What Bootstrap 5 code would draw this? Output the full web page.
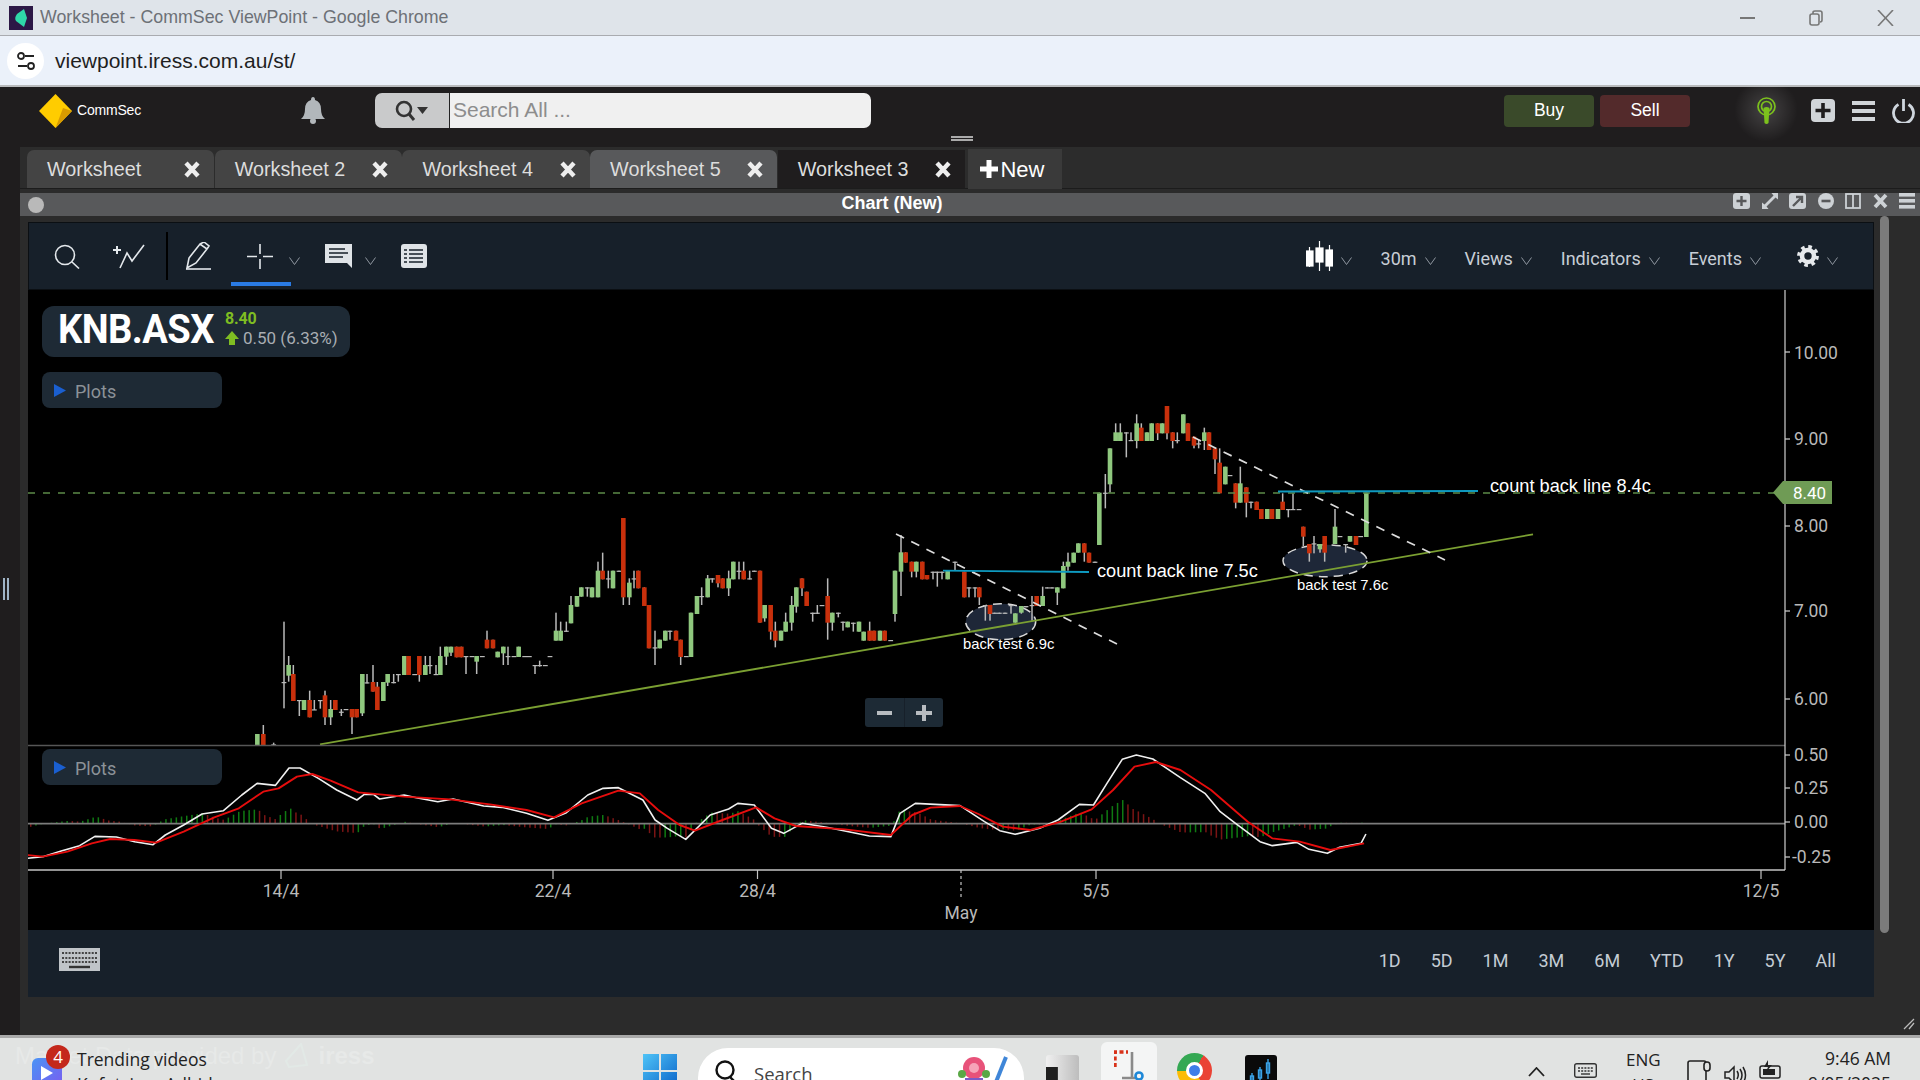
<!DOCTYPE html>
<html lang="en"><head><meta charset="utf-8"><title>Worksheet - CommSec ViewPoint</title>
<link rel="stylesheet" href="https://cdn.jsdelivr.net/npm/bootstrap@5.3.0/dist/css/bootstrap.min.css">
<style>
html,body{height:1080px;overflow:hidden;background:#2b2b2b;font-family:"Liberation Sans",Arial,sans-serif}
svg{display:block;flex:none}
.title-bar{height:36px;background:#dfe4ea;border-bottom:1px solid #a9abb0;color:#6d7177;font-size:17.8px;padding-left:9px}
.win-btn{margin-left:auto}
.win-btn svg+svg{margin-left:54px}
.win-btn{padding-right:26px}
.fav{width:24px;height:24px;background:#2c1846;margin-right:7px}
.addr{height:51px;background:#ebf1fa;border-bottom:2px solid #b9bbbd;font-size:21px;color:#1f1f1f;padding-left:7px}
.addr .tune{width:37px;height:36px;background:#fff;border-radius:50%;margin-right:11px}
.app-head{height:60px;background:#1f1d1e;position:relative;padding:0 0 13px 0}
.logo{margin-left:39px;width:33px}
.brand{color:#fff;font-size:14px;margin-left:5px;width:65px;letter-spacing:-.2px}
.bell{margin-left:159px}
.srch{margin-left:50px;width:496px;height:35px;flex-wrap:nowrap}
.srch .btn{width:75px;background:#c9cacb;border:0;border-right:1px solid #222;border-radius:7px 0 0 7px;padding:0}
.srch .form-control{height:35px;background:#f0f0f0;border:0;border-radius:0 7px 7px 0;font-size:21px;padding:0 4px 2px}
.srch .form-control::placeholder{color:#8d8d8d;opacity:1}
.grip{position:absolute;left:951px;top:49px;width:22px;height:5px;border-top:2px solid #aaa;border-bottom:2px solid #aaa}
.trade{width:90px;height:32px;padding:0;font-size:17.5px;color:#fff;border:0;border-radius:4px}
.buy{background:#3a4a2a;margin-left:633px}.sell{background:#532a2b;margin-left:6px}
.buy:hover{background:#3a4a2a;color:#fff}.sell:hover{background:#532a2b;color:#fff}
.beacon{margin-left:67px;width:18px;position:relative}
.beacon::before{content:"";position:absolute;left:-24px;top:-20px;width:66px;height:66px;background:radial-gradient(circle,rgba(255,255,255,.17),rgba(255,255,255,0) 68%)}
.beacon svg{position:relative}
.hd-plus{margin-left:36px}.hd-menu{margin-left:17px}.hd-pow{margin-left:17px}
.work{height:888px}
.side{width:20px;background:#1f1d1e;position:relative}
.side i{position:absolute;left:3px;top:431px;width:6px;height:22px;border-left:2px solid #9fb4c6;border-right:2px solid #9fb4c6}
.tabs{height:42px;background:#2c2c2c;padding:3px 0 0 7px;flex-wrap:nowrap;border-bottom:1px solid #1c1c1c}
.wtab{width:187.2px;height:38px;background:#444;color:#ddd;font-size:19.8px;padding:2px 14px 0 20px;border-radius:7px 7px 0 0;margin-right:.5px}
.wtab.on{background:#58595b}
.wtab.dark{background:#1f1d1e;border-radius:0}
.wtab svg{margin-left:auto;margin-top:-2px}
.newtab{width:94px;height:40px;background:#3a3a3a;color:#fff;font-size:22px;padding-left:12px;margin:-1px 0 0 3px;gap:2px}
.pbar{height:23px;margin-top:4px;background:#58595b;color:#fff;font-weight:700;font-size:18px;position:relative}
.pbar .dot{width:16px;height:16px;border-radius:50%;background:#b9b9b9;margin-left:8px}
.pbar .ttl{position:absolute;left:0;top:0;width:1744px;text-align:center;line-height:21px}
.pbar .ic{margin-left:auto;padding-right:5px;gap:11.5px;height:18px}
.pbody{background:#2b2b2b;padding:6px 0 0 8px;height:819px}
.col-chart{width:1846px}
.tbar{height:68px;background:#17202a;border:1px solid #0b0f13;position:relative;color:#c8ced6;font:18px Roboto,sans-serif}
.tbar .act{position:absolute;left:202px;top:59px;width:60px;height:4px;background:#2a7be4}
.tbar span{padding-top:5px}
.m26{margin-left:25px}.m33{margin-left:33px}.m21{margin-left:21px}.m17{margin-left:17px}.m35{margin-left:35px}.m16{margin-left:16px}.m25{margin-left:25px}.m13{margin-left:13px}
.vsep{width:2px;height:48px;background:#000}
.chev{margin-top:9px}
.tr{margin-left:auto;padding-right:35px}
.tr span+svg,.tr svg+svg{margin-left:8px}
.tr svg+span{margin-left:29px}
.tr svg+svg.gear{margin-left:36px}
.chart{height:640px;background:#000;position:relative;overflow:hidden}
.chart>svg{position:absolute;left:0;top:0}
.chart text{font-family:"Liberation Sans",sans-serif;fill:#fff}
.chart text.tag{font-family:Roboto,sans-serif}
.chart text.ax{font-family:Roboto,sans-serif;fill:#b9b9b9;font-size:17.5px}
.quote{position:absolute;left:14px;top:16px;width:308px;height:51px;background:#1e2a35;border-radius:12px;padding-left:16px}
.sym{font:700 41px/46px Roboto,sans-serif;color:#fff;letter-spacing:-.6px;width:167px;white-space:nowrap;transform:scaleX(.93);transform-origin:left center}
.q1{font:700 16px/16px Roboto,sans-serif;color:#7fbd22;margin-top:5px;letter-spacing:-.2px}
.q2{font:17px/20px Roboto,sans-serif;color:#a9aeb3;margin-top:1px;gap:4px}
.plots{position:absolute;left:14px;width:180px;height:36px;background:#1e2a35;border-radius:8px;color:#8c9298;font:18px Roboto,sans-serif;padding-left:12px;gap:9px}
.plots span{padding-top:2px}
.p1{top:82px}.p2{top:459px}
.zoomc{position:absolute;left:837px;top:408px;width:78px;height:29px;background:#1d2a35;border-radius:3px}
.zoomc div{width:39px;height:29px}
.zoomc div+div{border-left:1px solid #17202a}
.bbar{height:67px;background:#17202a;color:#c4ccd4;font:18px Roboto,sans-serif;padding:0 38px 7px 31px;gap:30px}
.bbar svg{margin-right:auto;margin-top:-2px}
.rsz{position:absolute;right:5px;bottom:5px}
.sbw{width:9px;margin-left:6px;background:#7b7b7b;height:717px;margin-top:-6px;border-radius:5px}
.pbody{position:relative}
.task{height:45px;background:#e1e3e2;border-top:3px solid #a9a9a9;overflow:hidden;position:relative;font-family:"Open Sans",sans-serif;color:#222;font-size:17px;align-items:flex-start}
.ghost{position:absolute;left:15px;top:4px;font:24px "Liberation Sans",sans-serif;color:#e7e9e8;white-space:nowrap;gap:9px}
.t-app{margin:20px 0 0 32px;width:30px;height:30px;border-radius:6px;background:linear-gradient(135deg,#4a94f5,#7a5cf0);position:relative}
.t-app b{position:absolute;left:14px;top:-13px;width:24px;height:24px;border-radius:50%;background:#c4281c;color:#fff;font:400 17px/24px "Open Sans",sans-serif;text-align:center}
.t-news{margin:9px 0 0 15px;width:130px;line-height:25px;white-space:nowrap;font-size:17.5px;position:relative}
.t-win{margin:16px 0 0 436px}
.pill{margin:10px 0 0 21px;width:326px;height:60px;background:#fff;border-radius:30px;padding-left:17px;color:#444;font-size:18.5px;align-items:flex-start}
.pill span{margin:12px 0 0 17px}
.pill svg.fl{margin:8px 12px 0 auto}
.pill svg.m{margin-top:12px}
.t-dark{margin:17px 0 0 22px;width:33px;height:40px;background:linear-gradient(#1f1f1f,#1f1f1f) left bottom/36% 70% no-repeat,linear-gradient(90deg,#f0f0f0,#bdbdbd);border-radius:3px}
.t-snip{margin:4px 0 0 22px;width:56px;height:60px;background:#f4f5f5;border-radius:6px;padding:8px 0 0 13px}
.t-chrome{margin:15px 0 0 20px;width:35px;height:35px;border-radius:50%;background:conic-gradient(from 30deg,#ea4335 0 120deg,#fbbc04 120deg 240deg,#34a853 240deg);position:relative}
.t-chrome::after{content:"";position:absolute;inset:9px;border-radius:50%;background:#3f7ee8;border:3px solid #fff;box-sizing:border-box}
.t-black{margin:17px 0 0 33px;width:32px;height:40px;background:#0a0a0a;border-radius:3px;padding:4px}
.t-car{margin:29px 0 0 251px}.t-key{margin:25px 0 0 29px}
.t-eng{margin:9px 0 0 29px;width:34px;line-height:25px;text-align:center;font-size:17px}
.t-mon{margin:22px 0 0 27px}.t-spk{margin:27px 0 0 12px}.t-bat{margin:22px 0 0 12px}
.t-clk{margin:8px 0 0 26px;width:83px;line-height:25px;text-align:right;font-size:17.5px;white-space:nowrap}
</style></head><body class="d-flex flex-column">

<div class="title-bar d-flex align-items-center">
  <div class="fav d-flex align-items-center justify-content-center"><svg width="14" height="20" viewBox="0 0 14 20"><path d="M10 1 L13 10 L10 19 L2 13 Q0 10 3 6Z" fill="#2fd8a8"/></svg></div>
  <span>Worksheet - CommSec ViewPoint - Google Chrome</span>
  <div class="win-btn d-flex align-items-center">
    <svg width="15" height="16" viewBox="0 0 15 16"><path d="M0 8H15" stroke="#777" stroke-width="2"/></svg>
    <svg width="14" height="16" viewBox="0 0 14 16" fill="none" stroke="#777" stroke-width="1.6"><rect x="1" y="4" width="9" height="11" rx="2"/><path d="M4 4V2.5Q4 1 6 1H11Q13 1 13 3V10Q13 12 11 12"/></svg>
    <svg width="17" height="16" viewBox="0 0 17 16" stroke="#777" stroke-width="1.6"><path d="M1 0L16 16M16 0L1 16"/></svg>
  </div>
</div>

<div class="addr d-flex align-items-center">
  <div class="tune d-flex align-items-center justify-content-center"><svg width="20" height="20" viewBox="0 0 20 20" fill="none" stroke="#222" stroke-width="1.8"><circle cx="5" cy="5" r="3"/><path d="M9 5H18M2 15H11"/><circle cx="15" cy="15" r="3"/></svg></div>
  <span>viewpoint.iress.com.au/st/</span>
</div>

<nav class="navbar app-head flex-nowrap justify-content-start align-items-center">
  <svg class="logo" width="33" height="34" viewBox="0 0 33 34"><path d="M16.5 0L33 17L16.5 34L0 17Z" fill="#ffcc00"/><path d="M16.5 34L24 14L33 17Z" fill="#d79a00"/></svg>
  <span class="brand">CommSec</span>
  <svg class="bell" width="24" height="27" viewBox="0 0 24 27"><path d="M12 0Q14 0 14 3Q20 5 20 12Q20 19 24 22H0Q4 19 4 12Q4 5 10 3Q10 0 12 0Z" fill="#b2b7bb"/><circle cx="12" cy="24" r="3" fill="#b2b7bb"/></svg>
  <form class="input-group srch mb-0">
    <button class="btn d-flex align-items-center justify-content-center gap-1" type="button">
      <svg width="34" height="24" viewBox="0 0 34 24"><circle cx="9" cy="10" r="7" fill="none" stroke="#333" stroke-width="2.6"/><path d="M14 15L19 21" stroke="#333" stroke-width="3"/><path d="M22 8H33L27.5 15Z" fill="#333"/></svg>
    </button>
    <input class="form-control" type="text" placeholder="Search All ...">
  </form>
  <div class="grip"></div>
  <button class="btn trade buy" type="button">Buy</button>
  <button class="btn trade sell" type="button">Sell</button>
  <div class="beacon"><svg width="19" height="28" viewBox="0 0 19 28" fill="none" stroke="#7cc11d" stroke-width="1.7"><circle cx="9.5" cy="9.5" r="8.5"/><circle cx="9.5" cy="9.5" r="5"/><path d="M6.5 11Q9.5 9 12.5 11L11.5 26Q9.5 28 7.5 26Z" fill="#7cc11d" stroke="none"/></svg></div>
  <svg class="hd-plus" width="24" height="23" viewBox="0 0 24 23"><rect width="24" height="23" rx="4" fill="#d0d4d8"/><path d="M12 4V19M4.5 11.500H19.500" stroke="#1f1d1e" stroke-width="3.6"/></svg>
  <svg class="hd-menu" width="23" height="22" viewBox="0 0 23 22" fill="#d0d4d8"><rect width="23" height="4" y="1"/><rect width="23" height="4" y="9"/><rect width="23" height="4" y="17"/></svg>
  <svg class="hd-pow" width="23" height="24" viewBox="0 0 23 24" fill="none" stroke="#cfd6de" stroke-width="2.8"><path d="M6.500 5.500A10 10 0 1 0 16.500 5.500"/><path d="M11.500 0V12"/></svg>
</nav>

<div class="work d-flex">
  <aside class="side"><i></i></aside>
  <main class="flex-grow-1">
    <ul class="nav tabs">
      <li class="wtab d-flex align-items-center"><span>Worksheet</span><svg width="16" height="17" viewBox="0 0 16 17"><path d="M2 2L14 15M14 2L2 15" stroke="#eee" stroke-width="4.4"/></svg></li>
      <li class="wtab d-flex align-items-center"><span>Worksheet 2</span><svg width="16" height="17" viewBox="0 0 16 17"><path d="M2 2L14 15M14 2L2 15" stroke="#eee" stroke-width="4.4"/></svg></li>
      <li class="wtab d-flex align-items-center"><span>Worksheet 4</span><svg width="16" height="17" viewBox="0 0 16 17"><path d="M2 2L14 15M14 2L2 15" stroke="#eee" stroke-width="4.4"/></svg></li>
      <li class="wtab on d-flex align-items-center"><span>Worksheet 5</span><svg width="16" height="17" viewBox="0 0 16 17"><path d="M2 2L14 15M14 2L2 15" stroke="#eee" stroke-width="4.4"/></svg></li>
      <li class="wtab dark d-flex align-items-center"><span>Worksheet 3</span><svg width="16" height="17" viewBox="0 0 16 17"><path d="M2 2L14 15M14 2L2 15" stroke="#eee" stroke-width="4.4"/></svg></li>
      <li class="newtab d-flex align-items-center"><svg width="18" height="18" viewBox="0 0 18 18"><path d="M9 0V18M0 9H18" stroke="#fff" stroke-width="5"/></svg><span>New</span></li>
    </ul>
    <div class="pbar d-flex">
      <div class="dot mt-1"></div>
      <div class="ttl">Chart (New)</div>
      <div class="ic d-flex">
        <svg width="17" height="16" viewBox="0 0 17 16"><rect width="17" height="16" rx="3" fill="#cdd1d5"/><path d="M8.500 3V13M3.500 8H13.500" stroke="#58595b" stroke-width="2.4"/></svg>
        <svg width="16" height="16" viewBox="0 0 16 16" fill="#cdd1d5"><path d="M9.500 0H16V6.500L13.500 4.500L4.500 13.500L6.500 16H0V9.500L2.500 11.500L11.500 2.500Z"/></svg>
        <svg width="17" height="16" viewBox="0 0 17 16"><rect width="17" height="16" rx="3" fill="#cdd1d5"/><path d="M4 13L12 5M7 4H13V10" stroke="#58595b" stroke-width="2.4" fill="none"/></svg>
        <svg width="16" height="16" viewBox="0 0 16 16"><circle cx="8" cy="8" r="8" fill="#cdd1d5"/><path d="M3.500 8H12.500" stroke="#58595b" stroke-width="2.6"/></svg>
        <svg width="16" height="16" viewBox="0 0 16 16" fill="none" stroke="#cdd1d5" stroke-width="1.8"><rect x="1" y="1" width="14" height="14"/><path d="M8 1V15"/></svg>
        <svg width="15" height="16" viewBox="0 0 15 16"><path d="M2 2L13 14M13 2L2 14" stroke="#cdd1d5" stroke-width="3.800"/></svg>
        <svg width="16" height="16" viewBox="0 0 16 16" fill="#cdd1d5"><rect width="16" height="3.600"/><rect width="16" height="3.600" y="6"/><rect width="16" height="3.600" y="12"/></svg>
      </div>
    </div>
    <div class="pbody d-flex">
      <div class="col-chart">
        <div class="tbar d-flex align-items-center">
          <svg class="m26" width="26" height="25" viewBox="0 0 26 25" fill="none" stroke="#e4e8ec" stroke-width="1.6"><circle cx="11" cy="11" r="9.500"/><path d="M18 18L25 24.500"/></svg>
          <svg class="m33" width="32" height="25" viewBox="0 0 32 25" fill="none" stroke="#e4e8ec" stroke-width="1.6"><path d="M4 2V10M0 6H8" stroke-width="2"/><path d="M7 24L14 9L19 17L31 1"/></svg>
          <div class="vsep m21"></div>
          <svg class="m17" width="27" height="28" viewBox="0 0 27 28" fill="none" stroke="#e4e8ec" stroke-width="1.6"><path d="M2 26L4 16L15 2L22 7L11 21L2 26ZM15 2L19 0L24 4L22 7" /><path d="M1 27H26"/></svg>
          <svg class="m35" width="26" height="25" viewBox="0 0 26 25" stroke="#e4e8ec" stroke-width="1.6"><path d="M13 0V10M13 15V25M0 12.500H10M16 12.500H26"/></svg>
          <svg class="m16 chev" width="11" height="8" viewBox="0 0 11 8" fill="none" stroke="#8f979f"><path d="M.5 .5L5.500 7.500L10.500 .5"/></svg>
          <svg class="m26" width="27" height="24" viewBox="0 0 27 24"><path d="M0 0H27V24L22 19H0Z" fill="#dfe3e7"/><path d="M4 5H20M4 9H23M4 13H18" stroke="#17202a" stroke-width="1.600"/></svg>
          <svg class="m13 chev" width="11" height="8" viewBox="0 0 11 8" fill="none" stroke="#8f979f"><path d="M.5 .5L5.500 7.500L10.500 .5"/></svg>
          <svg class="m25" width="26" height="24" viewBox="0 0 26 24"><rect width="26" height="24" rx="3" fill="#dfe3e7"/><path d="M8 6H22M8 10H22M8 14H22M8 18H22M3 6H6M3 10H6M3 14H6M3 18H6" stroke="#17202a" stroke-width="1.500"/></svg>
          <div class="act"></div>
          <div class="tr d-flex align-items-center">
            <svg width="27" height="30" viewBox="0 0 27 30" stroke="#fff" stroke-width="1.200" fill="#fff"><path d="M3.500 6V26M13.500 0V30M23.500 4V30"/><rect x="0" y="10" width="7" height="15"/><rect x="10" y="7" width="7" height="14"/><rect x="20" y="9" width="7" height="16"/></svg>
            <svg class="chev" width="11" height="8" viewBox="0 0 11 8" fill="none" stroke="#8f979f"><path d="M.5 .5L5.500 7.500L10.500 .5"/></svg>
            <span>30m</span>
            <svg class="chev" width="11" height="8" viewBox="0 0 11 8" fill="none" stroke="#8f979f"><path d="M.5 .5L5.500 7.500L10.500 .5"/></svg>
            <span>Views</span>
            <svg class="chev" width="11" height="8" viewBox="0 0 11 8" fill="none" stroke="#8f979f"><path d="M.5 .5L5.500 7.500L10.500 .5"/></svg>
            <span>Indicators</span>
            <svg class="chev" width="11" height="8" viewBox="0 0 11 8" fill="none" stroke="#8f979f"><path d="M.5 .5L5.500 7.500L10.500 .5"/></svg>
            <span>Events</span>
            <svg class="chev" width="11" height="8" viewBox="0 0 11 8" fill="none" stroke="#8f979f"><path d="M.5 .5L5.500 7.500L10.500 .5"/></svg>
            <svg class="gear" width="22" height="22" viewBox="0 0 22 22" fill="none" stroke="#e6e9ec"><circle cx="11" cy="11" r="6" stroke-width="4.600"/><circle cx="11" cy="11" r="9.200" stroke-width="3.400" stroke-dasharray="3.600 3.620"/></svg>
            <svg class="chev" width="11" height="8" viewBox="0 0 11 8" fill="none" stroke="#8f979f"><path d="M.5 .5L5.500 7.500L10.500 .5"/></svg>
          </div>
        </div>
        <div class="chart">
          <svg id="cv" width="1846" height="640" viewBox="28 290 1846 640">
            <g id="ell"></g><g id="macd"></g><g id="candles"></g><g id="lines"></g>
            <text x="1490" y="492" font-size="18.200">count back line 8.4c</text>
            <text x="1097" y="577" font-size="18.200">count back line 7.5c</text>
            <text x="963" y="649" font-size="14.800">back test 6.9c</text>
            <text x="1297" y="590" font-size="14.800">back test 7.6c</text>
            <polygon points="1773,492.500 1783,481 1832,481 1832,504 1783,504" fill="#6f9b55"/>
            <text class="tag" x="1793" y="499" font-size="17">8.40</text>
            <g class="ax-labels">
              <text class="ax" x="1794" y="359">10.00</text><text class="ax" x="1794" y="445">9.00</text><text class="ax" x="1794" y="532">8.00</text><text class="ax" x="1794" y="617">7.00</text><text class="ax" x="1794" y="705">6.00</text>
              <text class="ax" x="1794" y="761">0.50</text><text class="ax" x="1794" y="794">0.25</text><text class="ax" x="1794" y="828">0.00</text><text class="ax" x="1792" y="863">-0.25</text>
              <text class="ax" x="281" y="897" text-anchor="middle">14/4</text><text class="ax" x="553" y="897" text-anchor="middle">22/4</text><text class="ax" x="757.500" y="897" text-anchor="middle">28/4</text><text class="ax" x="1096" y="897" text-anchor="middle">5/5</text><text class="ax" x="1761" y="897" text-anchor="middle">12/5</text><text class="ax" x="961" y="919" text-anchor="middle">May</text>
            </g>
          </svg>
          <div class="quote d-flex">
            <div class="sym">KNB.ASX</div>
            <div>
              <div class="q1">8.40</div>
              <div class="q2 d-flex align-items-center"><svg width="14" height="14" viewBox="0 0 14 14"><path d="M7 0L14 8H10V14H4V8H0Z" fill="#7fbd22"/></svg><span>0.50 (6.33%)</span></div>
            </div>
          </div>
          <div class="plots p1 d-flex align-items-center"><svg width="12" height="13" viewBox="0 0 12 13"><path d="M0 0L12 6.500L0 13Z" fill="#1a5fd0"/></svg><span>Plots</span></div>
          <div class="plots p2 d-flex align-items-center"><svg width="12" height="13" viewBox="0 0 12 13"><path d="M0 0L12 6.500L0 13Z" fill="#1a5fd0"/></svg><span>Plots</span></div>
          <div class="zoomc d-flex">
            <div class="d-flex align-items-center justify-content-center"><svg width="15" height="4" viewBox="0 0 15 4"><rect width="15" height="4" fill="#b8bcc0"/></svg></div>
            <div class="d-flex align-items-center justify-content-center"><svg width="16" height="16" viewBox="0 0 16 16"><path d="M8 0V16M0 8H16" stroke="#b8bcc0" stroke-width="4"/></svg></div>
          </div>
        </div>
        <div class="bbar d-flex align-items-center">
          <svg width="41" height="23" viewBox="0 0 41 23"><rect width="41" height="23" fill="#c0c4c8"/><path d="M3 5H38M3 10H38M3 14H38" stroke="#444" stroke-width="2" stroke-dasharray="2 1.300"/><path d="M10 19H31" stroke="#333" stroke-width="2.400"/></svg>
          <span>1D</span><span>5D</span><span>1M</span><span>3M</span><span>6M</span><span>YTD</span><span>1Y</span><span>5Y</span><span>All</span>
        </div>
      </div>
      <div class="sbw"></div>
      <svg class="rsz" width="12" height="12" viewBox="0 0 12 12" stroke="#bbb" stroke-width="1.300"><path d="M1 11L11 1M6 11L11 5"/></svg>
    </div>
  </main>
</div>

<footer class="task d-flex">
  <div class="ghost d-flex align-items-center"><span>Market Data provided by</span><svg width="24" height="26" viewBox="0 0 24 26" fill="none" stroke="#e2e9e6" stroke-width="2"><path d="M1 18L16 1L22 22L4 24Z"/></svg><b>iress</b></div>
  <div class="t-app d-flex align-items-center justify-content-center"><svg width="12" height="14" viewBox="0 0 12 14"><path d="M0 0L12 7L0 14Z" fill="#fff"/></svg><b>4</b></div>
  <div class="t-news">Trending videos<br>Kofutsimo Adhid</div>
  <svg class="t-win" width="34" height="34" viewBox="0 0 34 34"><defs><linearGradient id="wg" x1="0" y1="0" x2="1" y2="1"><stop offset="0" stop-color="#4fc4f7"/><stop offset="1" stop-color="#0a63c9"/></linearGradient></defs><path d="M0 0H16V16H0ZM18 0H34V16H18ZM0 18H16V34H0ZM18 18H34V34H18Z" fill="url(#wg)"/></svg>
  <div class="pill d-flex">
    <svg class="m" width="22" height="24" viewBox="0 0 22 24" fill="none" stroke="#111" stroke-width="2.400"><circle cx="10" cy="10" r="8.500"/><path d="M15 17L21 23"/></svg>
    <span>Search</span>
    <svg class="fl" width="54" height="34" viewBox="0 0 54 34"><circle cx="16" cy="12" r="11" fill="#e8527a"/><circle cx="16" cy="12" r="5" fill="#f6a3b8"/><circle cx="4" cy="18" r="4" fill="#5aa846"/><circle cx="28" cy="18" r="4" fill="#5aa846"/><rect x="7" y="22" width="18" height="12" fill="#7a5ac8"/><path d="M48 1L38 26" stroke="#3f86d8" stroke-width="4"/><path d="M38 26L34 32" stroke="#777" stroke-width="4"/></svg>
  </div>
  <div class="t-dark"></div>
  <div class="t-snip"><svg width="32" height="32" viewBox="0 0 32 32" fill="none"><path d="M1 17V2H14" stroke="#d8321a" stroke-width="3.400" stroke-dasharray="4 2.500"/><path d="M18 2V28M8 28H22" stroke="#8a8a8a" stroke-width="2.600"/><circle cx="25" cy="26" r="3.500" stroke="#1e88d8" stroke-width="2.600"/></svg></div>
  <div class="t-chrome"></div>
  <div class="t-black"><svg width="24" height="30" viewBox="0 0 24 30" stroke="#3aa3e8" fill="none" stroke-width="1.400"><path d="M3 14V28M11 8V24M19 0V20"/><rect x="1.500" y="17" width="3" height="7"/><rect x="9.500" y="11" width="3" height="8"/><rect x="17.500" y="4" width="3" height="10"/></svg></div>
  <svg class="t-car" width="17" height="10" viewBox="0 0 17 10" fill="none" stroke="#222" stroke-width="1.800"><path d="M1 9L8.500 1L16 9"/></svg>
  <svg class="t-key" width="23" height="15" viewBox="0 0 23 15" fill="none" stroke="#333" stroke-width="1.400"><rect x=".7" y=".7" width="21.600" height="13.600" rx="2"/><path d="M4 5H19M4 8H19" stroke-dasharray="2 1.200"/><path d="M7 11H16"/></svg>
  <div class="t-eng">ENG<br>US</div>
  <svg class="t-mon" width="25" height="24" viewBox="0 0 25 24" fill="none" stroke="#222" stroke-width="1.600"><rect x="1" y="1" width="18" height="22" rx="2"/><rect x="17" y="2" width="6" height="9" rx="3" fill="#e1e3e2"/></svg>
  <svg class="t-spk" width="23" height="20" viewBox="0 0 23 20" fill="none" stroke="#222" stroke-width="1.500"><path d="M1 7H5L10 2V18L5 13H1Z"/><path d="M13 6Q15.500 10 13 14M16 4Q20 10 16 16M19 2Q24 10 19 18"/></svg>
  <svg class="t-bat" width="23" height="20" viewBox="0 0 23 20"><path d="M3 6H19Q21 6 21 8V16Q21 18 19 18H3Q1 18 1 16V8Q1 6 3 6Z" fill="none" stroke="#222" stroke-width="1.500"/><rect x="4" y="9" width="12" height="6" fill="#222"/><path d="M9 0L5 7H9L7 12L13 5H9Z" fill="#222"/></svg>
  <div class="t-clk">9:46 AM<br>9/05/2025</div>
</footer>

<script>
var NS='http://www.w3.org/2000/svg';
function el(p,n,a){var e=document.createElementNS(NS,n);for(var k in a)e.setAttribute(k,a[k]);document.getElementById(p).appendChild(e);return e}
var G='#8fc87e',R='#c8300c',W='#b9b9b9';
function add(ox,oy,L){L.forEach(function(c){var x=ox+c[0]/3,t=oy+c[1]/3,b=oy+c[2]/3,bt=oy+c[3]/3,bb=oy+c[4]/3;
  el('candles','rect',{x:x-.75,y:t,width:1.5,height:b-t,fill:W});
  if(c[5]==0)el('candles','rect',{x:x-2.4,y:bt,width:4.800,height:Math.max(1.2,bb-bt),fill:W});
  else el('candles','rect',{x:x-2.3,y:bt,width:4.600,height:bb-bt,fill:c[5]==1?G:R});
});}
add(250,510,[[22,672,705,672,705,1],[40,645,705,672,705,2],[71,698,705,703,705,0],[102,335,595,516,519,0],[116,438,515,465,497,1],[130,465,573,492,573,2],[148,570,618,570,572,0],[162,570,600,570,600,1],[179,542,622,570,622,2],[193,570,600,598,600,0],[211,570,596,570,572,0],[225,542,645,556,622,2],[242,570,645,597,622,1],[256,570,600,570,600,2],[274,597,618,605,607,0],[288,597,600,597,600,0],[306,597,672,597,622,2],[320,597,622,597,622,2],[337,492,618,492,610,1],[351,492,520,517,520,0],[369,465,545,516,545,2],[382,516,600,530,600,2],[400,516,573,516,573,1],[413,492,528,492,518,1],[431,492,520,516,519,0],[445,492,515,492,494,0],[463,438,495,438,495,1],[476,438,495,438,495,2],[494,492,495,492,495,0],[508,438,515,438,495,2],[526,438,495,465,495,1],[540,438,492,465,468,0],[558,465,495,492,495,0],[571,410,495,438,495,1],[589,410,465,410,440,1],[603,410,438,410,428,1],[620,410,442,410,442,2],[634,410,442,410,442,2],[648,438,492,438,441,0],[666,438,441,438,441,0],[680,438,492,438,455,1],[697,438,441,438,441,0],[711,362,415,389,415,2],[729,389,415,389,415,2],[743,425,442,425,442,1],[760,410,465,410,430,1],[774,410,465,438,441,0],[792,438,441,438,441,0],[806,410,441,410,441,1],[824,438,441,438,441,0],[838,438,441,438,441,0],[855,465,492,465,468,0],[869,452,470,465,468,0],[886,465,468,465,468,0]]);
add(550,510,[[0,438,441,438,441,0],[18,308,392,362,392,1],[32,335,392,362,392,1],[49,335,365,362,365,0],[63,258,340,285,340,1],[81,258,290,258,290,1],[94,232,260,232,260,1],[112,232,260,232,235,0],[126,232,262,232,262,1],[144,155,262,182,262,1],[158,128,208,182,208,2],[175,182,235,205,208,0],[189,182,235,182,235,1],[207,182,185,182,185,0],[220,24,285,24,262,2],[238,205,285,218,262,1],[252,182,235,205,208,0],[265,182,235,182,235,2],[283,232,288,232,288,2],[297,285,415,285,415,2],[315,362,465,412,415,0],[329,389,415,389,415,1],[346,362,392,362,392,1],[360,362,389,362,365,0],[378,362,392,362,392,2],[392,389,465,389,441,2],[409,438,441,438,441,0],[423,308,441,308,441,1],[441,258,312,258,312,1],[455,232,285,258,261,0],[473,195,262,205,262,1],[487,205,218,205,208,0],[504,195,232,195,220,2],[518,205,235,205,235,2],[536,182,258,205,235,1],[550,155,208,155,208,1],[567,155,208,182,185,0],[581,155,208,182,208,2],[599,182,208,205,208,0],[613,182,185,182,185,0],[630,182,338,182,338,2],[644,285,335,285,325,1],[662,285,389,285,365,2],[676,335,412,362,392,2],[693,362,392,362,392,1],[707,308,365,335,365,1],[725,258,362,285,338,1],[739,232,308,232,290,1],[756,205,258,205,235,2],[770,245,288,245,288,2],[788,308,335,308,312,0],[802,285,312,308,311,0],[816,285,288,285,288,0],[833,205,389,258,338,2],[847,308,362,308,338,1],[865,308,322,308,311,0],[879,335,362,335,338,0],[893,335,352,335,352,1]]);
add(850,520,[[10,308,335,308,311,0],[27,305,335,305,335,1],[41,335,362,335,362,1],[59,305,362,332,362,2],[72,332,362,332,362,2],[90,332,362,332,362,1],[104,332,362,332,362,2],[122,360,363,360,363,0],[135,152,305,152,282,1],[153,45,228,97,155,1],[167,97,128,97,128,2],[185,125,172,125,155,2],[199,125,172,125,155,1],[217,125,178,125,178,2],[231,165,178,165,178,2],[249,155,178,155,158,0],[262,155,200,155,158,0],[276,155,178,155,158,0],[293,152,178,152,178,1],[315,125,152,125,128,0],[343,155,232,155,232,2],[357,202,232,202,205,0],[375,202,232,202,205,0],[388,202,255,202,232,2],[406,255,302,255,258,0],[420,255,302,255,282,2],[434,278,281,278,281,0],[448,278,281,278,281,0],[465,278,281,278,281,0],[483,255,281,255,258,0],[496,280,308,280,308,1],[514,258,281,258,278,1],[528,258,262,258,262,0],[546,228,302,255,258,0],[560,228,258,228,258,2],[578,200,258,228,258,1],[592,202,205,202,205,0],[606,202,205,202,205,0],[622,202,255,202,218,1],[640,125,205,138,205,1],[654,98,152,125,140,1],[671,98,128,98,128,1],[685,70,98,70,98,1],[703,70,125,70,98,2],[717,98,128,98,128,2],[735,125,128,125,128,0]]);
add(1090,400,[[28,278,435,278,435,1],[46,222,325,278,281,0],[60,145,278,145,253,1],[77,70,123,97,123,1],[91,70,123,97,123,1],[109,97,172,97,100,0],[123,97,123,120,123,0],[140,43,145,70,123,1],[154,70,123,83,123,2],[171,97,123,97,123,1],[185,70,123,70,123,1],[203,70,120,70,100,2],[217,70,100,70,100,1],[231,18,118,18,100,2],[248,97,145,97,123,2],[262,97,130,120,123,0],[280,43,100,43,100,1],[294,70,123,70,123,2],[312,110,145,110,137,2],[326,120,145,130,133,0],[343,83,150,97,123,1],[357,97,150,97,150,2],[375,145,222,145,178,2],[389,145,280,188,280,2],[406,200,253,200,253,1],[420,225,228,225,228,0],[437,250,325,250,308,2],[451,200,308,250,308,1],[469,262,352,262,308,2],[483,305,325,305,308,0],[500,305,330,305,330,2],[514,327,357,327,357,2],[532,327,357,327,357,1],[546,327,357,327,357,2],[564,327,357,327,357,1],[578,280,330,305,330,2],[595,327,352,327,330,0],[609,280,330,327,330,0],[627,327,330,327,330,0],[640,380,438,380,410,2],[658,432,485,432,460,2],[672,408,460,430,433,0],[690,432,458,432,448,1],[704,408,485,408,458,2],[735,327,432,380,432,1],[750,408,411,408,411,0],[767,432,458,432,435,0],[780,408,425,408,425,1],[798,408,435,408,435,2],[812,408,411,408,411,0],[829,278,411,278,411,1]]);
[[1000.7,621.7,35,18],[1325,560.7,42,16]].forEach(function(e){el('ell','ellipse',{cx:e[0],cy:e[1],rx:e[2],ry:e[3],fill:'#1e2738',stroke:'#d8d8d8','stroke-width':1.5,'stroke-dasharray':'9 6'})});
function ln(a,b,c,d,col,w,dash){var o={x1:a,y1:b,x2:c,y2:d,stroke:col,'stroke-width':w};if(dash)o['stroke-dasharray']=dash;el('lines','line',o)}
ln(28,493,1775,493,'#5c8a48',1.6,'7 8');
ln(320,744.3,1533,534.4,'#7ba032',1.8);
ln(896,534,1117,644,'#dcdcdc',1.7,'9 8');
ln(1193,437,1445,560,'#dcdcdc',1.7,'9 8');
ln(943,570.7,1089,572,'#0e9ac0',1.8);
ln(1278,491.5,1478,491,'#0e9ac0',1.8);
ln(28,745.5,1785,745.5,'#565656',1.6);
ln(28,870,1785,870,'#c4c4c4',1.6);
ln(28,823.7,1785,823.7,'#7c7c7c',1.8);
ln(1785,290,1785,870,'#d0d0d0',1.2);
[352,439,526,611,699,755,788,822,857].forEach(function(y){ln(1785,y,1790,y,'#d0d0d0',1.2)});
[281,553,757.5,1096,1761].forEach(function(x){ln(x,870,x,879,'#c4c4c4',1.2)});
ln(961,870,961,900,'#c4c4c4',1.2,'3 3');
function Z5(a){return a.map(function(p){return [p[0]/1.6333,740+p[1]/3]})}
function Z6(a){return a.map(function(p){return [960+p[0]/1.6333,740+p[1]/3]})}
var wh=Z5([[44,355],[70,350],[100,333],[130,317],[155,289],[190,291],[220,305],[250,314],[270,285],[300,255],[330,222],[365,212],[395,165],[420,130],[450,136],[472,84],[490,84],[520,115],[550,150],[583,180],[595,163],[610,163],[620,177],[660,165],[680,173],[715,185],[740,177],[790,198],[820,202],[860,220],[895,241],[925,218],[960,165],[985,145],[1010,143],[1050,180],[1070,240],[1090,265],[1120,298],[1160,225],[1190,207],[1205,190],[1232,195],[1260,265],[1280,280],[1310,250],[1350,262],[1420,288],[1455,290],[1470,220],[1495,190],[1568,197]]).concat(Z6([[40,245],[65,272],[90,283],[130,265],[160,240],[195,193],[218,195],[240,130],[265,58],[288,45],[315,57],[360,113],[400,160],[425,215],[450,250],[490,305],[510,317],[550,307],[570,328],[600,340],[620,322],[655,310],[663,282]]));
var rd=Z5([[44,345],[70,350],[110,335],[150,310],[180,297],[220,300],[255,308],[300,275],[350,232],[390,205],[430,155],[455,145],[485,110],[510,102],[540,122],[585,157],[660,170],[735,178],[800,193],[860,210],[905,232],[950,190],[1010,152],[1045,160],[1075,210],[1110,255],[1135,272],[1180,240],[1235,202],[1265,235],[1300,258],[1380,268],[1455,285],[1490,225],[1520,203],[1568,198]]).concat(Z6([[30,222],[70,260],[115,270],[165,245],[215,208],[250,150],[285,80],[320,66],[360,90],[410,150],[470,245],[510,295],[555,305],[605,330],[660,310]]));
function at(a,x){for(var i=1;i<a.length;i++)if(x<=a[i][0]){var f=(x-a[i-1][0])/(a[i][0]-a[i-1][0]);return a[i-1][1]+f*(a[i][1]-a[i-1][1])}return a[a.length-1][1]}
var prev=0;for(var bx=30;bx<1365;bx+=5.2){var h=(at(rd,bx)-at(wh,bx))*1.15;var by=h>0?823.7-h:823.7;
  el('macd','rect',{x:bx,y:by,width:1.5,height:Math.abs(h),fill:h>prev?'#0f7a12':'#7a1414'});prev=h}
function pl(a,c,w){el('lines','polyline',{points:a.map(function(p){return p.join(',')}).join(' '),fill:'none',stroke:c,'stroke-width':w,'stroke-linejoin':'round'})}
pl(wh,'#f0f0f0',1.6);pl(rd,'#e60d0d',1.9);
</script>
</body></html>
